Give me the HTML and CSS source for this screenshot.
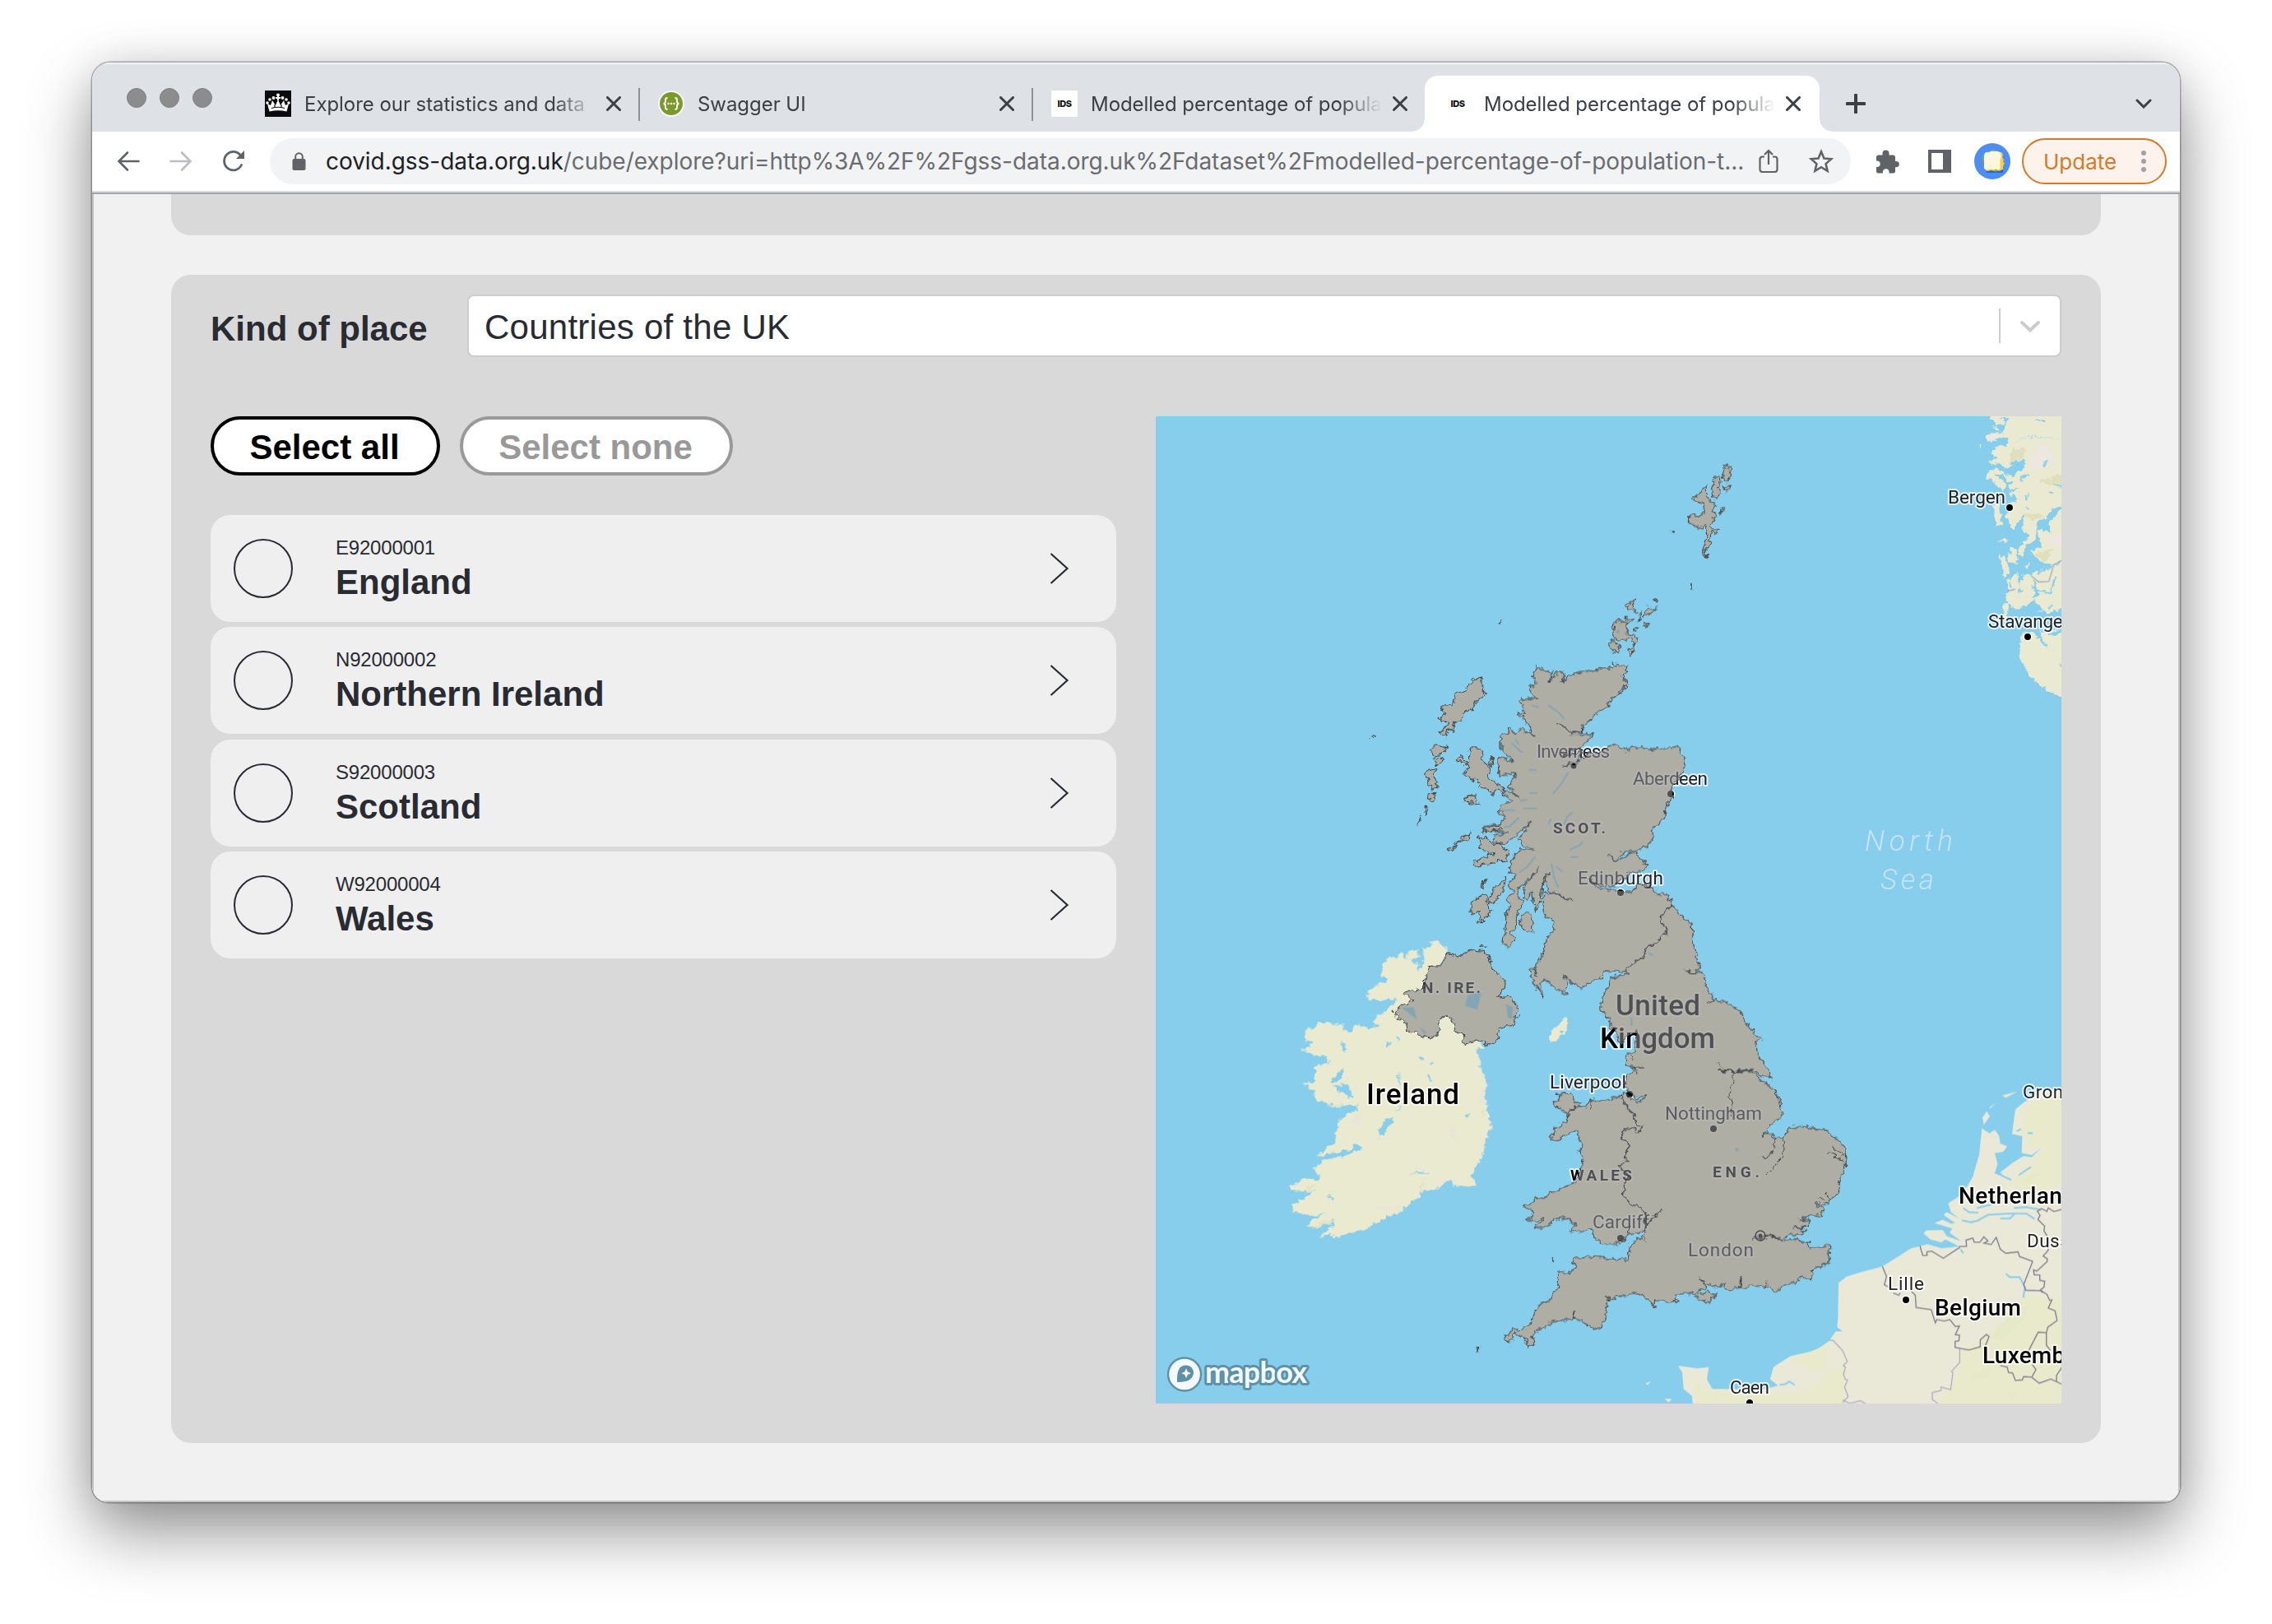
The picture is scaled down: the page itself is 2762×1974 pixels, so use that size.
FILE: index.html
```html
<!DOCTYPE html>
<html lang="en">
<head>
<meta charset="utf-8">
<title>Modelled percentage of population</title>
<link rel="stylesheet" href="styles.css">
</head>
<body>
<svg class="defs" width="0" height="0" aria-hidden="true">
  <symbol id="i-close" viewBox="0 0 18 18"><path d="M1.500 1.500l15 15M16.500 1.500l-15 15" fill="none" stroke="#3c4043" stroke-width="3" stroke-linecap="round"/></symbol>
  <symbol id="i-chev" viewBox="0 0 24 40"><path d="M1.500 2l20 18-20 18" fill="none" stroke="#292b32" stroke-width="2.200"/></symbol>
</svg>
<div class="window">
  <header class="tabs">
    <div class="lights"><i></i><i></i><i></i></div>
    <div class="tab">
      <svg class="fav" viewBox="0 0 32 32"><rect width="32" height="32" fill="#0b0b0b"/><g fill="#fff"><circle cx="16" cy="5.500" r="2"/><path d="M15 6h2v6h-2zM13 8h6v2h-6z"/><circle cx="10.500" cy="9" r="1.900"/><circle cx="21.500" cy="9" r="1.900"/><circle cx="6" cy="11" r="1.800"/><circle cx="26" cy="11" r="1.800"/><circle cx="3" cy="15" r="1.800"/><circle cx="29" cy="15" r="1.800"/><path d="M5.500 25.500 3 16l4 2 2-6 4 6 3-7 3 7 4-6 2 6 4-2-2.500 9.500Q16 23 5.500 25.500z"/></g><path d="M8 21.500q8-2.500 16 0M12 17v3M20 17v3" fill="none" stroke="#0b0b0b" stroke-width="1.200"/></svg>
      <span class="title">Explore our statistics and data</span><svg class="x"><use href="#i-close"/></svg>
    </div>
    <div class="tab sep">
      <svg class="fav" viewBox="0 0 32 32"><circle cx="16" cy="16" r="15.800" fill="#fff"/><circle cx="16" cy="16" r="14" fill="#7b9a2c"/><path d="M11.500 9q-3 0-2.500 3.500 0 3.500-2.500 3.500 2.500 0 2.500 3.500-.5 3.500 2.500 3.500M20.500 9q3 0 2.500 3.500 0 3.500 2.500 3.500-2.500 0-2.500 3.500.5 3.500-2.500 3.500" fill="none" stroke="#fff" stroke-width="1.900"/><g fill="#fff"><circle cx="12.500" cy="16" r="1.200"/><circle cx="16" cy="16" r="1.200"/><circle cx="19.500" cy="16" r="1.200"/></g></svg>
      <span class="title">Swagger UI</span><svg class="x"><use href="#i-close"/></svg>
    </div>
    <div class="tab sep">
      <span class="fav ids">IDS</span>
      <span class="title">Modelled percentage of popula</span><svg class="x"><use href="#i-close"/></svg>
    </div>
    <div class="tab active">
      <span class="fav ids">IDS</span>
      <span class="title">Modelled percentage of popula</span><svg class="x"><use href="#i-close"/></svg>
    </div>
    <svg class="plus" viewBox="0 0 24 24"><path d="M12 1.500v21M1.500 12h21" stroke="#3c4043" stroke-width="4" stroke-linecap="round"/></svg>
    <svg class="down" viewBox="0 0 20 12"><path d="M2 2l8 8 8-8" fill="none" stroke="#3c4043" stroke-width="3" stroke-linecap="round"/></svg>
  </header>

  <div class="toolbar">
    <svg class="ico back" viewBox="0 0 28 28"><path d="M26.500 14H3M13 3.500 2.500 14 13 24.500" fill="none" stroke="#5f6368" stroke-width="2.600" stroke-linecap="round"/></svg>
    <svg class="ico fwd" viewBox="0 0 28 28"><path d="M1.500 14H25M15 3.500 25.500 14 15 24.500" fill="none" stroke="#bcbdc0" stroke-width="2.600" stroke-linecap="round"/></svg>
    <svg class="ico reload" viewBox="0 0 28 28"><path d="M23.500 18.500A11 11.300 0 1 1 22.500 7" fill="none" stroke="#5f6368" stroke-width="2.800" stroke-linecap="round"/><path d="M27 1v10H17z" fill="#5f6368"/></svg>
    <div class="omnibox">
      <svg class="lock" viewBox="0 0 17 22"><path d="M4.200 9V5.600a4.300 4.300 0 0 1 8.600 0V9" fill="none" stroke="#5f6368" stroke-width="2"/><rect x=".5" y="8" width="16" height="14" rx="2" fill="#5f6368"/></svg>
      <span class="url"><b>covid.gss-data.org.uk</b>/cube/explore?uri=http%3A%2F%2Fgss-data.org.uk%2Fdataset%2Fmodelled-percentage-of-population-t...</span>
      <svg class="share" viewBox="0 0 24 30"><path d="M7 9.500H4.500a3 3 0 0 0-3 3V25a3 3 0 0 0 3 3h15a3 3 0 0 0 3-3V12.500a3 3 0 0 0-3-3H17M12 19V2.500M7 7l5-5 5 5" fill="none" stroke="#5f6368" stroke-width="2.200"/></svg>
      <svg class="star" viewBox="0 0 28 28"><path d="M14 3l3.200 7.700 8.300.7-6.300 5.500 1.900 8.100-7.100-4.300L6.900 25l1.900-8.100-6.300-5.500 8.300-.7z" fill="none" stroke="#5f6368" stroke-width="2.400"/></svg>
    </div>
    <svg class="puzzle" viewBox="0 0 29 29"><path d="M1 9a2.500 2.500 0 0 1 2.500-2.500H8.500V4.500a4 4 0 0 1 8 0v2h5A2.500 2.500 0 0 1 24 9v5h1.200a3.500 3.500 0 0 1 0 7.200H24V26a2.500 2.500 0 0 1-2.500 2.500h-5V27a3.800 3.800 0 0 0-7.600 0v1.500H3.500A2.500 2.500 0 0 1 1 26v-5h1.500a3.800 3.800 0 0 0 0-7.500H1z" fill="#5f6368"/></svg>
    <svg class="side" viewBox="0 0 28 28"><path d="M0 0h28v28H0zM4 4v20h14V4z" fill="#5f6368" fill-rule="evenodd"/></svg>
    <svg class="avatar" viewBox="0 0 44 44"><circle cx="22" cy="22" r="22" fill="#4d8df6"/><path d="M15 24h20v12H15z" fill="#2463e8"/><path d="M10 17q0-4 5-4l6 2v18q-6 1-8-1-3-6-3-15z" fill="#69bf45"/><path d="M11 20h7v8h-7z" fill="#e6684b"/><path d="M20 11h13q3 2 1 6l2 3-1 3 2 1-2 4v4l-5 2-3-1-3 1-3-1-5 1-4-3z" fill="#fbcf3c"/><path d="M19 10l4-2 4 2-4 3zM23 33l3-1 3 1-3 2z" fill="#6fc62f"/><path d="M12 16q0-6 6-5 3-2 6-1 8-1 8.500 4 1 3-1 6v10q0 2.500-3 2-3-1-6 0-3-1-6 .5-4 0-4.500-3z" fill="#fff6e0"/></svg>
    <div class="update"><span>Update</span><i class="kebab"></i></div>
  </div>

  <main class="page">
    <section class="panel top"></section>
    <section class="panel">
      <div class="field">
        <label>Kind of place</label>
        <div class="select"><span>Countries of the UK</span><i></i><svg viewBox="0 0 26 16"><path d="M3 3l10 9.500L23 3" fill="none" stroke="#ccc" stroke-width="4" stroke-linecap="round"/></svg></div>
      </div>
      <div class="cols">
        <div class="left">
          <div class="buttons"><button>Select all</button><button class="off">Select none</button></div>
          <ul>
            <li><i></i><p><small>E92000001</small><strong>England</strong></p><svg><use href="#i-chev"/></svg></li>
            <li><i></i><p><small>N92000002</small><strong>Northern Ireland</strong></p><svg><use href="#i-chev"/></svg></li>
            <li><i></i><p><small>S92000003</small><strong>Scotland</strong></p><svg><use href="#i-chev"/></svg></li>
            <li><i></i><p><small>W92000004</small><strong>Wales</strong></p><svg><use href="#i-chev"/></svg></li>
          </ul>
        </div>
        <svg class="map" viewBox="1405 506 1101 1200">
          <defs>
            <!-- Roughens the coastlines; one shared region keeps fills and outlines aligned -->
            <filter id="rough" filterUnits="userSpaceOnUse" x="1405" y="506" width="1101" height="1200" color-interpolation-filters="sRGB">
              <feTurbulence type="fractalNoise" baseFrequency=".16" numOctaves="2" seed="4" result="n"/>
              <feDisplacementMap in="SourceGraphic" in2="n" scale="9" xChannelSelector="R" yChannelSelector="G"/>
            </filter>
            <g id="uk">
              <g transform="translate(1800 500) scale(.33333)">
                <!-- Scotland -->
                <path d="M206 932 238 942 262 956 250 988 275 955 290 946 305 958 296 988 318 960 340 963 370 945 410 950 435 932 480 938 478 918 500 928 537 925 532 955 520 960 522 980 533 985 525 1010 500 1035 475 1048 455 1080 408 1112 400 1125 375 1142 373 1172 325 1172 305 1150 280 1138 305 1154 330 1176 350 1175 385 1183 412 1172 395 1195 365 1225 335 1235 300 1262 340 1245 372 1235 355 1275 300 1292 345 1290 372 1265 400 1240 435 1242 460 1222 490 1216 535 1236 570 1222 625 1236 655 1228 690 1228 710 1222 730 1240 740 1260 745 1295 735 1315 715 1340 700 1370 697 1410 675 1445 672 1480 635 1515 622 1530 628 1550 620 1570 585 1598 530 1605 487 1637 467 1617 487 1640 515 1632 545 1610 570 1608 573 1625 611 1657 590 1678 550 1680 520 1705 480 1735 420 1725 395 1705 420 1733 500 1750 535 1756 558 1748 570 1725 605 1725 645 1758 685 1765 698 1798 655 1848 680 1898 650 1930 605 1955 595 1985 550 2018 532 2042 450 2040 445 2065 405 2075 380 2100 345 2095 325 2075 300 2052 315 2080 312 2125 275 2105 235 2073 215 2085 230 2140 215 2120 200 2085 180 2060 182 2035 195 2035 205 2060 200 2025 232 1970 235 1940 250 1908 270 1895 262 1855 240 1845 228 1820 230 1755 270 1758 340 1790 285 1760 248 1745 230 1710 250 1678 225 1715 220 1780 205 1820 190 1790 185 1750 170 1780 155 1775 160 1730 215 1665 150 1730 130 1750 155 1795 130 1840 130 1880 110 1900 122 1928 105 1948 77 1945 80 1920 90 1905 92 1840 110 1800 95 1780 120 1750 100 1730 130 1690 100 1680 115 1640 140 1595 190 1600 150 1575 140 1560 185 1495 90 1580 50 1570 45 1550 100 1535 5 1530 10 1515 70 1505 90 1475 60 1460 75 1435 120 1420 85 1400 90 1380 140 1408 100 1370 135 1320 100 1325 70 1330 65 1265 120 1275 75 1235 75 1170 100 1175 105 1155 125 1175 145 1155 195 1185 175 1145 135 1100 160 1105 145 1047 215 1050 180 1025 178 1005 205 990 188 968z"/>
                <!-- England -->
                <path d="M698 1798 710 1810 735 1845 768 1870 778 1900 772 1925 788 1980 785 1995 805 2035 775 2046 745 2041 775 2048 810 2045 815 2060 825 2100 848 2142 830 2160 855 2144 910 2160 950 2188 970 2230 995 2265 1028 2288 1005 2300 1008 2335 1022 2365 1055 2405 1063 2435 1055 2422 1025 2425 993 2398 940 2405 870 2405 935 2409 990 2402 1030 2445 1068 2468 1090 2510 1100 2570 1060 2600 1045 2620 1025 2645 1048 2628 1075 2650 1105 2652 1115 2630 1130 2608 1200 2610 1262 2622 1310 2665 1328 2685 1333 2740 1312 2800 1303 2850 1258 2890 1220 2888 1255 2910 1240 2933 1205 2930 1160 2948 1198 2945 1198 2975 1140 2975 1185 2990 1170 3002 1115 3005 1100 3022 1060 3005 990 3018 1060 3009 1100 3025 1150 3018 1195 3035 1200 3050 1280 3040 1280 3052 1268 3055 1274 3105 1215 3125 1200 3163 1168 3158 1145 3178 1100 3190 1080 3212 1045 3198 995 3187 950 3193 952 3155 946 3196 910 3208 880 3185 850 3195 815 3178 798 3163 820 3195 780 3215 710 3220 718 3245 700 3252 635 3240 633 3265 600 3230 560 3213 495 3230 470 3245 462 3225 467 3250 455 3270 458 3305 435 3345 410 3347 385 3325 340 3308 340 3280 336 3310 250 3320 235 3340 210 3345 185 3375 198 3385 175 3412 160 3380 125 3360 120 3385 95 3392 90 3370 120 3348 140 3350 185 3325 190 3300 210 3260 245 3245 280 3198 287 3137 325 3143 345 3120 335 3105 340 3088 415 3080 475 3093 535 3090 545 3040 590 3010 610 2960 660 2912 600 2965 600 2920 575 2895 545 2895 520 2855 525 2815 545 2795 525 2770 502 2752 540 2735 520 2725 545 2680 530 2660 515 2650 520 2620 560 2615 580 2630 587 2608 568 2602 560 2565 530 2535 508 2495 530 2482 550 2510 580 2515 608 2493 570 2505 540 2480 525 2450 540 2415 560 2395 595 2390 555 2393 532 2385 532 2342 565 2335 560 2310 575 2258 530 2280 515 2310 495 2280 490 2250 470 2248 472 2220 437 2175 447 2125 468 2100 475 2070 495 2060 535 2052 532 2042 550 2018 595 1985 605 1955 650 1930 680 1898 655 1848z"/>
                <!-- Wales -->
                <path d="M508 2495 487 2505 430 2520 405 2510 375 2535 345 2535 318 2565 315 2590 275 2615 248 2655 290 2660 300 2638 355 2625 358 2660 372 2675 357 2700 375 2730 365 2755 360 2790 340 2810 290 2837 262 2845 235 2870 200 2867 190 2885 157 2902 190 2915 190 2940 160 2947 200 2952 232 2940 200 2975 225 2980 260 2960 265 2945 310 2940 345 2965 325 2985 345 2995 400 2980 415 3015 445 3037 500 3037 520 3020 545 2998 580 2995 605 2975 600 2920 575 2895 545 2895 520 2855 525 2815 545 2795 525 2770 502 2752 540 2735 520 2725 545 2680 530 2660 515 2650 520 2620 560 2615 580 2630 587 2608 568 2602 560 2565 530 2535z"/>
                <path d="M280 2490 330 2485 345 2520 368 2520 320 2562 290 2545 262 2518 285 2515zM780 3225 828 3208 860 3223 825 3252z"/>
                <!-- Shetland and Orkney -->
                <path d="M888 205 900 198 914 205 902 255 890 256 880 245zM855 240 873 240 876 262 862 275 873 290 865 318 846 312 841 285zM885 275 905 270 913 285 895 292zM822 268 824 305 835 320 860 345 850 360 860 380 838 405 845 425 875 435 858 446 840 435 835 490 818 510 828 532 810 518 825 460 820 410 800 430 760 405 762 380 800 380 820 360 800 330 770 320 800 300zM875 355 888 358 875 372zM690 438 700 434 698 444zM766 632 773 632 769 643z"/>
                <path d="M530 705 560 685 555 715 568 733 545 722zM635 688 646 686 638 697zM592 745 610 715 643 718 615 738zM575 735 586 735 580 765zM525 750 555 760 540 775zM485 770 505 762 540 775 530 805 575 825 565 850 545 828 510 836 482 820zM595 770 617 778 602 786zM555 795 575 790 570 802zM470 845 490 834 508 870 495 884 478 870zM548 860 562 850 550 897 540 870z"/>
                <path d="M148 1840 165 1826 183 1835 195 1900 165 1903 145 1870zM70 768h3v4h-3zM262 3088h3v10h-3z"/>
              </g>
              <!-- Northern Ireland and the Inner Hebrides -->
              <g transform="translate(1550 980) scale(.33333 .35714)">
                <path d="M630 500 675 510 712 488 765 495 785 510 785 540 810 570 840 598 838 620 808 650 865 645 887 695 870 745 815 755 812 790 782 815 735 795 690 812 685 775 660 765 645 725 622 712 598 735 600 765 575 790 530 785 515 770 482 765 480 742 430 702 455 680 508 660 472 640 485 628 540 620 548 580 560 545 605 542z"/>
                <path d="M740 110 765 102 800 130 820 125 850 155 840 185 730 205 722 190 800 160 745 145 755 130zM628 145 665 130 640 155zM655 125 715 90 705 112zM755 75 810 65 835 78 770 88zM778 320 800 280 842 245 830 290 795 335zM710 365 720 325 770 300 785 360 760 390 738 392 750 360zM750 270 768 248 755 278zM745 475 762 475 760 485z"/>
              </g>
              <!-- Outer Hebrides, Skye, St Kilda and Scilly -->
              <g transform="scale(1.7615)">
                <path d="M1023 467 1023 474 1026 479 1019 483 1016 489 1010 492 1008 498 1004 498 1003 505 999 503 998 509 994 505 999 500 993 496 997 493 995 487 1003 487 1004 479 1013 475 1016 470zM987 517 990 514 999 516 994 521 989 522zM990 523 996 524 991 528zM986 530 992 531 989 535 993 543 988 546 986 540 984 535zM986 547 991 547 989 553 985 551zM984 556 986 558 983 562zM979 566 981 564 978 569zM1005 523 1009 522 1012 527 1014 524 1015 516 1020 516 1024 518 1023 524 1028 530 1027 536 1035 542 1039 546 1032 545 1030 549 1026 544 1020 543 1020 539 1012 536 1010 533 1014 530zM1010 552 1013 549 1018 549 1020 554 1014 554zM1029 522 1031 528 1028 528zM947 508h1.500v1.500h-1.500zM1020 930l1-1 0 2-2 2z"/>
              </g>
            </g>
          </defs>
          <rect x="1405" y="506" width="1101" height="1200" fill="#87ceec"/>
          <g filter="url(#rough)">
          <!-- Norway -->
          <g transform="translate(2200 500) scale(.33333)" fill="#eaead3">
            <path d="M650 0 740 0 740 18 690 30 720 40 665 60 720 85 740 118 800 90 940 105V120L815 105 760 125 800 150 720 210 690 195 650 185 680 175 665 150 682 125 725 122 720 100 640 100 660 75 700 80zM620 120 630 118 622 145zM648 225 680 210 740 240 735 262 700 225 680 225 690 245 715 260 710 290 650 240zM720 0H940V105L800 88 740 118 700 80 720 40zM760 125 815 105 940 120V335L880 360 860 395 835 400 822 470 790 490 770 535 760 500 800 455 775 425 785 370 745 430 715 390 735 330 755 320 725 300 770 275 725 290 740 240 790 200zM668 340 690 345 700 415 680 418zM940 335V540L885 560 840 550 800 515 845 490 835 440 880 440 865 415zM730 500 755 505 758 555 725 550zM690 520 710 530 728 575 708 615 705 560zM720 620 755 580 762 635 775 595 815 600 820 690 760 722 720 700zM810 590 940 545V710L870 740 820 690 835 660zM706 700 722 700 720 760 706 755zM840 800 940 800V1048L870 1020 800 960 765 900 770 810 800 800 860 850zM690 480 715 455 720 475zM835 432h12v14h-12zM780 570l22-15-8 20zM830 725l25-5-15 15z"/>
            <path d="M820 130 860 120 905 180 870 190 830 220 800 200zM645 90 670 80 680 105 650 110zM885 445h35v45l-50-5z" fill="#ece7e0"/>
            <path d="M740 135 790 140 770 170 725 190zM830 260 920 230 940 290 850 260zM770 370 870 380 810 395zM815 520 890 500 860 550z" fill="#dfdfbc"/>
            <path d="M740 300 755 330M790 300v30M850 200l15-18M880 290l6 15M760 660l15-12M730 625l10 20M810 640l40 20 30 0 15-60M870 720l20-15M800 230l-35 20M735 190l20-7M820 28l40 5M890 272l25 4M830 590l35-15M870 815l55-14M830 820l38 40M790 345l8 10" fill="none" stroke="#87ceec" stroke-width="7"/>
          </g>
          <!-- Ireland and the Isle of Man -->
          <g transform="translate(1550 980) scale(.33333 .35714)">
            <path fill="#eaead0" d="M565 455 600 465 635 490 600 540 700 650 735 795 770 822 730 825 750 870 752 900 775 940 760 990 770 1020 788 1095 770 1130 755 1200 735 1225 715 1250 735 1290 655 1295 640 1268 600 1300 530 1310 530 1330 470 1365 445 1390 410 1388 400 1405 350 1425 335 1440 260 1455 235 1470 200 1455 160 1470 205 1430 220 1405 118 1435 130 1410 190 1385 120 1395 65 1380 65 1360 110 1330 145 1310 55 1312 55 1290 110 1270 150 1275 165 1265 140 1235 180 1205 250 1190 325 1165 295 1150 285 1165 150 1195 180 1165 215 1145 235 1070 265 1045 305 1035 300 1018 215 1020 150 998 145 975 100 940 145 935 145 890 195 870 190 850 140 855 125 835 90 828 130 820 130 795 108 795 112 760 150 750 160 735 250 742 262 770 285 765 290 745 345 755 390 750 353 730 400 700 430 680 440 660 340 655 328 640 380 605 408 600 385 575 395 540 412 515 445 515 460 500 480 520 485 495 520 488 525 515 490 525 535 540 545 520 537 480 570 480zM1060 716 1070 745 1025 803 997 803 1008 765z"/>
            <path fill="#e2e2c4" d="M170 1410 225 1412 130 1440zM525 1300 545 1270 530 1320zM110 1300 160 1285 120 1310zM750 1040 765 1030 765 1055z"/>
            <path fill="#e9e6d8" d="M740 1000 760 950 772 1015zM640 1090 660 1100 660 1140 635 1120zM280 1045 310 1055 300 1085 280 1070zM370 1360 470 1360 410 1380z"/>
            <path fill="#87ceec" d="M205 935 250 890 250 915 225 940zM205 952 265 945 285 998 240 970zM240 800 262 820 250 832zM440 785 455 780 450 808zM400 805 420 800 412 820zM450 905 462 960 448 930zM528 850 545 860 530 870zM555 905 578 935 555 925zM693 1050 712 1045 700 1060zM375 1105 405 1065 435 1062 405 1105 380 1128zM522 530 538 545 520 560zM190 1320 212 1330 200 1337zM492 1252 530 1244 568 1252 530 1250zM460 1020 445 1040 450 1025zM565 880 578 868 575 880z"/>
          </g>
          </g>
          <path transform="translate(2200 500) scale(.33333)" d="M810 602 835 622 872 620 890 560 920 543M720 655l30-6M912 922l8 8" fill="none" stroke="#a9a8bb" stroke-width="4"/>
          <!-- Continental Europe -->
          <g transform="translate(2180 1280) scale(.33333)">
            <path fill="#eae9d8" d="M985 130 900 140 870 160 840 180 810 205 805 240 798 295 835 303 833 365 870 372 905 345 870 380 840 375 800 400 755 435 765 445 735 440 745 405 735 365 765 360 780 340 755 330 750 300 735 280 715 293 688 275 678 370 655 450 635 485 600 525 565 548 575 580 605 603 560 580 548 590 590 620 575 622 545 608 515 620 580 640 570 655 612 686 560 668 545 645 485 647 475 657 500 680 540 690 555 680 605 705 540 712 490 697 430 712 325 778 250 798 195 815 165 838 163 965 160 1000 180 1015 155 1015 130 1050 80 1085 -10 1105 -72 1145 -85 1190 -55 1212 -120 1230 -230 1225 -295 1225 -315 1190 -308 1145 -350 1150 -420 1140 -405 1165 -400 1225 -370 1250 -365 1290H985zM690 235 705 213 717 230 695 262zM762 155 818 140 775 163zM715 198 738 180 718 202zM-540 1205 -520 1198 -530 1210zM-470 1260 -443 1262 -455 1274z"/>
            <path fill="#e9eacb" d="M985 150 850 190 830 280 860 310 850 350 930 340 860 400 790 480 880 520 985 470zM130 1060 -10 1120 80 1160 190 1150 180 1280 -350 1285 -370 1180 -320 1230 -100 1240 20 1240 100 1200 120 1130zM985 900 850 880 740 1000 610 1090 600 1180 520 1280H985z"/>
            <path fill="#e4e8c4" d="M800 940 860 920 830 980 760 1040 720 1040zM840 460 900 430 860 480zM640 1180 720 1150 700 1190zM780 1240 830 1230 800 1255z" opacity=".7"/>
            <path d="M620 565 640 580 675 582M670 565 740 548M805 565 850 562 905 572M650 615 670 612 710 590 790 585 850 585 880 605M755 603h35l15-15M615 610l40 8M822 445l45-30M735 435l60 28M775 805l15 12h35l20 35-6 40M815 285l15-8M855 292h18M610 715l10 15M-50 1210l20-2 15-10 20 12" fill="none" stroke="#87ceec" stroke-width="6"/>
            <path d="M462 703 472 738 488 738 487 725 505 722 547 748 608 708M605 705 632 705 630 682 655 675 660 690 680 690 695 670 710 685 695 693 722 698 740 672 755 715 775 730 820 725 825 742 873 760 840 845 848 865 905 867 925 880 935 902 943 900 930 930 955 940 962 975 928 1000 923 1020 893 1018 860 1082 850 1105M325 778 340 815 332 845 365 862 M365 875l20 8 5-8M430 868l15 15 3 45 55 8 15 48 5-12 28 5 20-5 20 25 15-2-15 32 15 2-2 20-14 2v22l50 10 42-12v-25l22-20 10 8-18 45M755 1140l25 5 5 20 15 2 10 27 25-2 5-12 30 2 15-28-15-20M870 1182l27 22 42-15 40 18M923 1020v45l15 20M980 1145l-20 30v22M980 570l-30 8-20-13-5 12-20-10-15 10 10 15-8 15 25 25-3 15 10 18 10 20-5 35-18 20 15 10 0 10-38 35-12-4 3 18 20 0v20l18 3-3 22-13 10 8 10" fill="none" stroke="#7d7b8c" stroke-width="4"/>
            <path d="M130 1046 145 1048 180 1085 197 1125 182 1140 190 1145 183 1172 190 1190 198 1192 187 1218 200 1252 180 1275M180 1265 205 1278 245 1268 265 1280M607 1078v50l-30 33 5 5-8 62-35-10v12l-32 8v25l20 15" fill="none" stroke="#b0afbf" stroke-width="4"/>
          </g>
          <g filter="url(#rough)"><use href="#uk" fill="#ebead4"/></g>
          <g class="labels">
            <g class="city">
              <text x="1868" y="921" textLength="89">Inverness</text><text x="1985" y="954" textLength="91">Aberdeen</text><text x="1918" y="1075" textLength="104">Edinburgh</text>
              <text x="1884" y="1323" textLength="93">Liverpool</text><text x="2024" y="1361" textLength="118">Nottingham</text><text x="1936" y="1493" textLength="69">Cardiff</text><text x="2052" y="1527" textLength="80">London</text>
              <text x="2368" y="611.500" textLength="70">Bergen</text><text x="2417" y="763" textLength="98">Stavanger</text><text x="2459" y="1335" textLength="106">Groningen</text><text x="2464" y="1516" textLength="113">Dusseldorf</text><text x="2295" y="1568" textLength="44">Lille</text><text x="2103" y="1694" textLength="48">Caen</text>
            </g>
            <g class="country"><text x="1964" y="1234" textLength="103">United</text><text x="1945" y="1274" textLength="140">Kingdom</text><text x="1661" y="1341.500" textLength="113">Ireland</text></g>
            <g class="country small"><text x="2381" y="1463" textLength="157">Netherlands</text><text x="2352" y="1599" textLength="105">Belgium</text><text x="2410" y="1657" textLength="158">Luxembourg</text></g>
            <g class="region"><text x="1888" y="1012.700" textLength="64">SCOT.</text><text x="1729" y="1207" textLength="71">N. IRE.</text><text x="1909" y="1435" textLength="75">WALES</text><text x="2082" y="1430.700" textLength="57">ENG.</text></g>
            <g class="sea"><text x="2267" y="1034" textLength="107">North</text><text x="2286" y="1081" textLength="65">Sea</text></g>
            <g fill="#000" stroke="#fff" stroke-opacity=".8" stroke-width="3" paint-order="stroke"><circle cx="1913" cy="931" r="3.500"/><circle cx="2031" cy="965" r="4"/><circle cx="1970" cy="1085" r="4"/><circle cx="1981" cy="1330" r="4"/><circle cx="2083" cy="1372" r="4"/><circle cx="1970" cy="1505" r="4"/><circle cx="2443" cy="617" r="4"/><circle cx="2465" cy="774" r="4"/><circle cx="2317" cy="1580" r="4"/><circle cx="2127" cy="1705" r="4"/><circle cx="2140" cy="1502" r="2.500"/></g>
            <circle cx="2140" cy="1502" r="6" fill="none" stroke="#000" stroke-width="1.600"/>
          </g>
          <g filter="url(#rough)"><use href="#uk" fill="#868686" opacity=".6"/><use href="#uk" class="coast"/></g>
          <g transform="translate(1800 500) scale(.33333)" fill="none" stroke="#86a5b2" stroke-width="6">
            <path d="M247 1072l40 28 18 22M187 1072l25 8M320 1315l-22 38-35 42M112 1210l40 35M127 1195l12 20M175 1308h28M145 1420l25-5M178 1392h30M75 1455h50M155 1448h50M305 1505l10-25 20-18M248 1505l8-20M85 1515h20l35-35M325 1598l35-15 12-12M140 1682l30-22 30-38M258 1650l10 50 16 38M275 1660l25 20M550 2210v30M328 1625h28M612 1975l18 10"/>
            <path d="M928 2692h12M496 800l8 8" stroke-width="12"/>
          </g>
          <g transform="translate(1550 980) scale(.33333 .35714)" fill="#86a5b2"><path d="M703 642 752 635 738 692 692 680zM842 672 868 685 865 722 850 722zM460 685 505 685 518 725zM525 750 552 768 545 778z"/></g>
          <g filter="url(#rough)"><g transform="translate(1800 500) scale(.33333)" fill="none" stroke="#3f403e" stroke-width="3">
            <path d="M925 2405l-2 40-18 35 12 35-6 50M865 2378l20 20 40 8M868 2408l30-5M1075 2650l-8 50-12 15-28 3M1105 2652l-2 60-30 38-30 32M1288 2686l20 18 20 2M1264 2704l45 20 20-20M1310 2725l20 22M1046 3170v25M1260 2850l8 28M1234 2864l20 20M545 2350l10 14M560 2390l12 24M405 2510v36M1150 2978l35 0M542 2966v30M590 3010l15 14"/>
          </g></g>
          <g class="mapbox">
            <circle cx="1440" cy="1670.500" r="20" fill="#f3fafd" stroke="#5d91a8" stroke-width="2.400"/>
            <path d="M1431 1680q-1-20 10-20.500 9 0 10 9-1 12-20 11.500z" fill="#5d91a8"/>
            <path d="M1442 1663.500l1.800 3.900 3.900 1.800-3.900 1.800-1.800 3.900-1.800-3.900-3.900-1.800 3.900-1.800z" fill="#fff"/>
            <text x="1465" y="1681" textLength="124">mapbox</text>
          </g>
        </svg>
      </div>
    </section>
  </main>
</div>
</body>
</html>
```

FILE: styles.css
```css
* { box-sizing: border-box; margin: 0; padding: 0; }
body { width: 2762px; height: 1974px; padding: 76px 112px 0; background: #fff; font-family: "Liberation Sans", Arial, sans-serif; color: #292b32; overflow: hidden; }
svg { display: block; flex: none; }
i { display: block; flex: none; }
.defs { position: absolute; }
.window { width: 2538px; height: 1750px; border-radius: 22px 22px 20px 20px; overflow: hidden; background: #f1f1f1; box-shadow: 0 0 0 1.500px rgba(0,0,0,.28), 0 36px 80px rgba(0,0,0,.42), 0 0 50px rgba(0,0,0,.1); display: flex; flex-direction: column; }

.tabs { height: 84px; flex: none; background: #dee1e6; box-shadow: inset 0 2px 1px #f2f3f5; display: flex; align-items: flex-end; padding-left: 42px; font-family: Inter, sans-serif; }
.lights { display: flex; gap: 16px; width: 144px; height: 68px; padding-top: 14.500px; flex: none; }
.lights i { width: 24px; height: 24px; border-radius: 50%; background: #8b8c8e; border: 1px solid #7f8082; }
.tab { width: 478px; height: 68px; flex: none; display: flex; align-items: center; padding-left: 24px; position: relative; }
.fav { width: 32px; height: 32px; flex: none; }
.ids { background: #fff; font-size: 11px; font-weight: 800; line-height: 32px; text-align: center; color: #111; letter-spacing: -.5px; }
.title { width: 352px; margin-left: 16px; font-size: 24px; letter-spacing: -.05px; line-height: 34px; padding-top: 1px; color: #3c4043; white-space: nowrap; -webkit-mask-image: linear-gradient(90deg, #000 302px, transparent 354px); mask-image: linear-gradient(90deg, #000 302px, transparent 354px); }
.x { width: 18px; height: 18px; margin-left: 15px; }
.tab.sep::before { content: ""; position: absolute; left: 0; top: 15px; width: 2px; height: 40px; background: #8e9196; }
.tab.active { width: 480px; background: #fff; border-radius: 16px 16px 0 0; }
.tab.active::before, .tab.active::after { content: ""; position: absolute; bottom: 0; width: 16px; height: 16px; }
.tab.active::before { left: -16px; background: radial-gradient(circle at 0 0, transparent 15.500px, #fff 16px); }
.tab.active::after { right: -16px; background: radial-gradient(circle at 100% 0, transparent 15.500px, #fff 16px); }
.plus { width: 24px; height: 24px; margin: 0 0 22px 32px; }
.down { width: 20px; height: 12px; margin: 0 34px 28px auto; }

.toolbar { height: 76px; flex: none; background: #fff; border-bottom: 2px solid #a2a4a6; box-shadow: inset 0 -2px #dcdddf; display: flex; align-items: center; padding: 0 16px 2px 30px; font-family: Inter, sans-serif; }
.ico { width: 28px; height: 28px; margin-right: 36px; }
.reload { margin-right: 30px; }
.omnibox { width: 1922px; height: 56px; border-radius: 28px; background: #f1f3f4; display: flex; align-items: center; flex: none; padding-left: 27px; }
.lock { width: 17px; height: 22px; }
.url { width: 1740px; flex: none; margin-left: 24px; font-size: 28px; letter-spacing: -.04px; white-space: nowrap; color: #6a6c70; }
.url b { font-weight: 400; color: #202124; }
.share { width: 24px; height: 30px; margin-left: 2px; }
.star { width: 30px; height: 30px; margin-left: 37px; }
.puzzle { width: 29px; height: 29px; margin-left: 30px; }
.side { width: 28px; height: 28px; margin-left: 35px; }
.avatar { width: 44px; height: 44px; margin-left: 28px; }
.update { width: 176px; height: 56px; margin-left: 14px; border: 2.500px solid #d57b28; border-radius: 28px; background: #fdf3ec; color: #d57b28; font-size: 26px; display: flex; align-items: center; padding-left: 24px; }
.update span { width: 90px; }
.kebab { width: 6px; height: 6px; border-radius: 50%; background: #a0a1a3; box-shadow: 0 -10px #a0a1a3, 0 10px #a0a1a3; margin-left: 29px; }

.page { flex: 1; background: #f1f1f1; border: solid #c4c4c4; border-width: 0 2px 2px; padding: 0 94px; }
.panel { background: #d9d9d9; border-radius: 24px; height: 1420px; padding: 24px 48px 48px; }
.panel.top { height: 50px; border-radius: 0 0 24px 24px; padding: 0; margin-bottom: 48px; }
.field { display: flex; align-items: center; height: 76px; }
label { width: 312px; font-size: 42px; font-weight: 700; letter-spacing: 0; padding-top: 7px; }
.select { flex: 1; height: 76px; background: #fff; border: 2px solid #ccc; border-radius: 8px; font-size: 42px; display: flex; align-items: center; padding: 0 23px 0 19px; }
.select span { flex: 1; letter-spacing: .25px; padding-top: 3px; }
.select i { width: 2px; height: 42px; background: #ccc; }
.select svg { width: 26px; height: 16px; margin: 2px 0 0 23px; }
.cols { display: flex; justify-content: space-between; margin-top: 72px; }
.left { width: 1101px; }
.buttons { display: flex; gap: 24px; }
button { width: 279px; height: 72px; border: 4px solid #000; border-radius: 36px; background: #fff; color: #000; font: 700 42px/60px "Liberation Sans", Arial, sans-serif; padding: 3px 2px 0 0; }
button.off { width: 332px; border-color: #999; color: #999; }
ul { list-style: none; margin-top: 48px; display: flex; flex-direction: column; gap: 6.300px; }
li { height: 130px; background: #efefef; border-radius: 24px; display: flex; align-items: center; padding: 0 57px 0 28px; }
li i { width: 72px; height: 72px; border: 2px solid #292b32; border-radius: 50%; }
li p { margin-left: 52px; flex: 1; display: flex; flex-direction: column; padding-top: 4px; }
small { font-size: 24px; line-height: 30px; letter-spacing: -.2px; }
strong { font-size: 42px; line-height: 54px; }
li svg { width: 24px; height: 40px; }

.map { width: 1101px; height: 1200px; overflow: hidden; }
.coast { fill: none; stroke: #4b4e50; stroke-width: 1.200px; }
#uk path { vector-effect: non-scaling-stroke; stroke-linejoin: round; }
.labels text { font-family: Roboto, sans-serif; paint-order: stroke; stroke: #fff; stroke-opacity: .75; stroke-width: 4px; stroke-linejoin: round; }
.labels .city text { font-size: 22.500px; fill: #222; }
.labels .country text { font-size: 35px; font-weight: 500; fill: #000; }
.labels .country.small text { font-size: 28px; }
.labels .region text { font-size: 19px; font-weight: 700; fill: #000; }
.labels .sea text { font-size: 35px; font-style: italic; font-weight: 300; fill: #c7e2f9; stroke: none; }
.mapbox text { font: 700 36px Lato, sans-serif; fill: #f3fafd; stroke: #5d91a8; stroke-width: 6px; paint-order: stroke; stroke-linejoin: round; }
```
